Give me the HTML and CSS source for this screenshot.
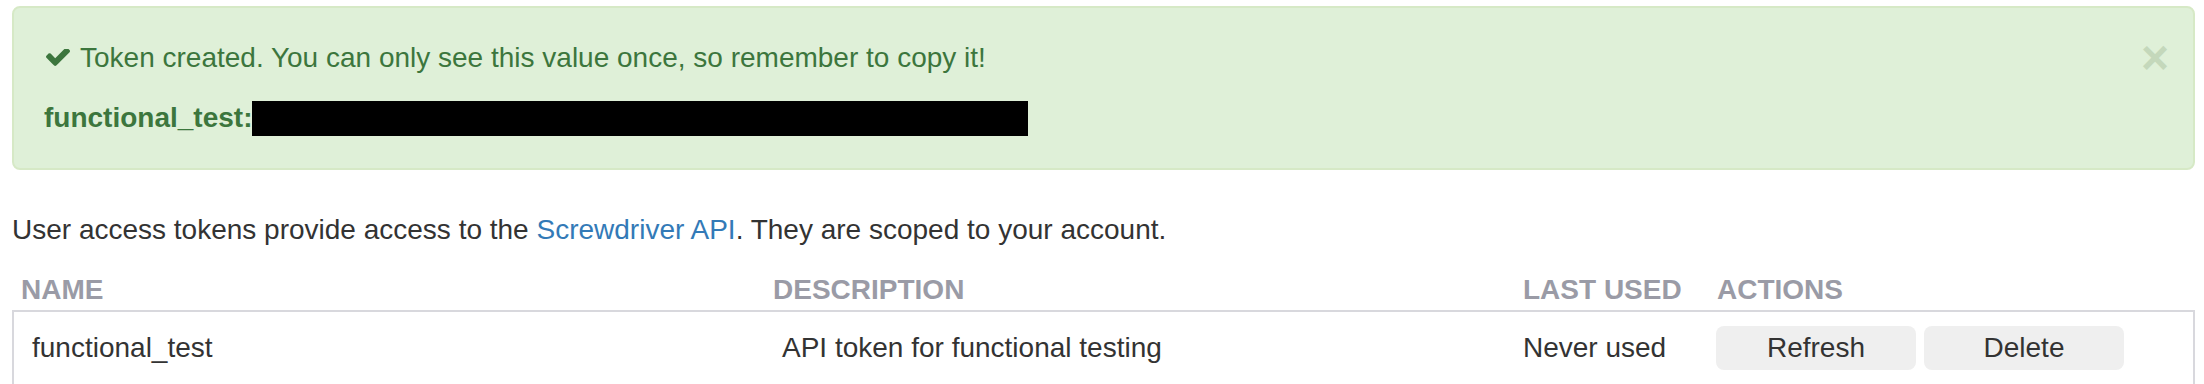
FILE: index.html
```html
<!DOCTYPE html>
<html lang="en">
<head>
<meta charset="utf-8">
<title>Access Tokens</title>
<link rel="stylesheet" href="styles.css">
</head>
<body>
<div class="page">
  <div class="alert">
    <div class="alert-msg"><svg class="check" viewBox="121 430 1550 1092" width="24" height="17" aria-hidden="true"><path fill="#3c763d" d="M1671 566q0 40-28 68l-724 724-136 136q-28 28-68 28t-68-28l-136-136-362-362q-28-28-28-68t28-68l136-136q28-28 68-28t68 28l294 295 656-657q28-28 68-28t68 28l136 136q28 28 28 68z"/></svg>Token created. You can only see this value once, so remember to copy it!</div>
    <div class="alert-token"><strong>functional_test:</strong><span class="redacted"></span></div>
    <span class="close">×</span>
  </div>
  <p class="intro">User access tokens provide access to the <a class="link" href="#">Screwdriver API</a>. They are scoped to your account.</p>
  <div class="tokens">
    <div class="thead">
      <div class="th">Name</div>
      <div class="th">Description</div>
      <div class="th">Last used</div>
      <div class="th">Actions</div>
    </div>
    <div class="trow">
      <div class="td">functional_test</div>
      <div class="td">API token for functional testing</div>
      <div class="td">Never used</div>
      <div class="td actions">
        <button class="btn">Refresh</button>
        <button class="btn">Delete</button>
      </div>
    </div>
  </div>
</div>
</body>
</html>
```

FILE: styles.css
```css
html, body {
  margin: 0;
  padding: 0;
  background: #ffffff;
}

body {
  font-family: "Liberation Sans", Arial, Helvetica, sans-serif;
  font-size: 28px;
  line-height: 40px;
  color: #333333;
}

.page {
  padding: 6px 9px 0 12px;
}

.alert {
  position: relative;
  background: #dff0d8;
  border: 2px solid #d6e9c6;
  border-radius: 8px;
  color: #3c763d;
  padding: 30px 70px 30px 30px;
  margin-bottom: 40px;
}

.check {
  display: inline-block;
  width: 24px;
  height: 17px;
  margin-left: 2px;
  margin-right: 10px;
  vertical-align: 1px;
}

.alert-token {
  margin-top: 20px;
}

.alert-token strong {
  font-weight: bold;
}

.redacted {
  display: inline-block;
  width: 776px;
  height: 35px;
  background: #000000;
  vertical-align: -9px;
}

.close {
  position: absolute;
  top: 26px;
  right: 24px;
  font-size: 48px;
  line-height: 1;
  font-weight: bold;
  color: #c4d8bb;
  cursor: pointer;
}

.intro {
  margin: 0 0 20px;
}

.link {
  color: #337ab7;
  text-decoration: none;
}

.thead {
  display: grid;
  grid-template-columns: 752px 750px 194px 1fr;
  padding-left: 9px;
  font-weight: bold;
  text-transform: uppercase;
  color: #9a9ba6;
}

.trow {
  display: grid;
  grid-template-columns: 750px 741px 193px 1fr;
  align-items: center;
  border: 2px solid #d8d8dd;
  padding: 14px 0 14px 18px;
}

.actions {
  display: flex;
  gap: 8px;
}

.btn {
  width: 200px;
  height: 44px;
  border: none;
  border-radius: 8px;
  background: #efefef;
  color: #333333;
  font-family: "Liberation Sans", Arial, Helvetica, sans-serif;
  font-size: 28px;
  line-height: 40px;
  padding: 0;
  cursor: pointer;
}
```
